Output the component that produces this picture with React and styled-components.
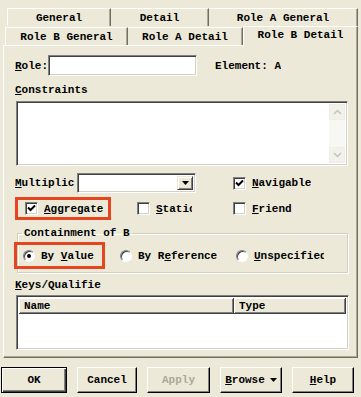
import React from 'react';
import styled, { createGlobalStyle } from 'styled-components';

const GlobalStyle = createGlobalStyle`
  html, body {
    margin: 0;
    padding: 0;
    background: #ece9d8;
  }
  body {
    font-family: "Liberation Mono", "DejaVu Sans Mono", monospace;
    font-size: 11px;
    font-weight: bold;
    color: #000;
  }
`;

const Dialog = styled.div`
  width: 361px;
  height: 397px;
  box-sizing: border-box;
  padding-top: 8px;
  display: flex;
  flex-direction: column;
  overflow: hidden;
`;

const TabRow = styled.div`
  display: flex;
  height: ${(p) => p.$height}px;
  padding-left: ${(p) => p.$left}px;
  position: relative;
  z-index: ${(p) => p.$z || 0};
`;

const Tab = styled.div`
  box-sizing: border-box;
  width: ${(p) => p.$width}px;
  height: ${(p) => (p.$active ? 21 : 18)}px;
  margin-top: ${(p) => (p.$active ? 0 : p.$offset || 0)}px;
  display: flex;
  align-items: center;
  justify-content: center;
  padding-bottom: ${(p) => (p.$active ? 4 : 0)}px;
  background: #ece9d8;
  border-top: 1px solid #fff;
  border-left: ${(p) => (p.$first || p.$active ? '1px solid #fff' : 'none')};
  border-right: 1px solid #716f64;
  box-shadow: inset -1px 0 0 #aca899;
  white-space: nowrap;
`;

const Panel = styled.div`
  margin: 0 3px;
  height: 313px;
  box-sizing: border-box;
  border-top: 1px solid #fff;
  border-left: 1px solid #fff;
  border-right: 1px solid #716f64;
  border-bottom: 1px solid #716f64;
  box-shadow: inset -1px -1px 0 #aca899;
  padding-left: 11px;
  display: flex;
  flex-direction: column;
`;

const Row = styled.div`
  display: flex;
  align-items: center;
  height: ${(p) => p.$height}px;
  margin-top: ${(p) => p.$top}px;
`;

const Label = styled.span`
  display: inline-block;
  width: ${(p) => (p.$width ? `${p.$width}px` : 'auto')};
  margin-left: ${(p) => p.$left || 0}px;
  white-space: nowrap;
  overflow: hidden;
`;

const U = styled.span`
  text-decoration: underline;
`;

const Sunken = styled.div`
  box-sizing: border-box;
  background: #fff;
  border-top: 1px solid #808080;
  border-left: 1px solid #808080;
  border-right: 1px solid #fff;
  border-bottom: 1px solid #fff;
  box-shadow: inset 1px 1px 0 #404040, inset -1px -1px 0 #d4d0c8;
`;

const TextInput = styled(Sunken)`
  width: 149px;
  height: 21px;
`;

const TextArea = styled(Sunken)`
  width: 332px;
  height: 65px;
  margin: 3px 0 0 1px;
  display: flex;
  justify-content: flex-end;
  padding: 2px;
`;

const ScrollBar = styled.div`
  width: 16px;
  display: flex;
  flex-direction: column;
  justify-content: space-between;
  background: #f7f7f4;
`;

const ScrollButton = styled.div`
  height: 16px;
  box-sizing: border-box;
  border: 1px solid #eeede6;
  background: #f2f1ea;
  display: flex;
  align-items: center;
  justify-content: center;
`;

const Combo = styled(Sunken)`
  width: 119px;
  height: 20px;
  display: flex;
  justify-content: flex-end;
  padding: 2px;
`;

const DropButton = styled.div`
  width: 16px;
  box-sizing: border-box;
  background: #ece9d8;
  border-top: 1px solid #ece9d8;
  border-left: 1px solid #ece9d8;
  border-right: 1px solid #404040;
  border-bottom: 1px solid #404040;
  box-shadow: inset 1px 1px 0 #fff, inset -1px -1px 0 #808080;
  display: flex;
  align-items: center;
  justify-content: center;
`;

const CheckBox = styled(Sunken)`
  width: 13px;
  height: 13px;
  flex-shrink: 0;
  margin-right: 6px;
  display: flex;
  align-items: center;
  justify-content: center;
`;

const Radio = styled.div`
  width: 12px;
  height: 12px;
  flex-shrink: 0;
  box-sizing: border-box;
  border-radius: 50%;
  background: #fff;
  border: 1px solid;
  border-color: #808080 #fff #fff #808080;
  box-shadow: inset 1px 1px 0 #404040;
  margin-right: 6px;
  display: flex;
  align-items: center;
  justify-content: center;
`;

const Dot = styled.div`
  width: 4px;
  height: 4px;
  border-radius: 50%;
  background: #000;
`;

const Cell = styled.div`
  display: flex;
  align-items: center;
  width: ${(p) => (p.$width ? `${p.$width}px` : 'auto')};
  flex-shrink: 0;
`;

const Highlight = styled.div`
  display: flex;
  align-items: center;
  box-sizing: border-box;
  width: ${(p) => p.$width}px;
  height: ${(p) => p.$height}px;
  border: 3px solid #e5451f;
  padding-left: ${(p) => p.$pad}px;
  margin-left: ${(p) => p.$shift || 0}px;
`;

const Group = styled.fieldset`
  margin: 7px 0 0 2px;
  padding: 0;
  width: 331px;
  height: 46px;
  box-sizing: border-box;
  border: 1px solid #d0d0bf;
  border-radius: 0;
  box-shadow: 1px 1px 0 #fff, inset 1px 1px 0 #fff;
  display: flex;
  align-items: flex-start;
`;

const Legend = styled.legend`
  padding: 0 2px;
  margin-left: 4px;
  line-height: 12px;
`;

const RadioRow = styled.div`
  display: flex;
  align-items: center;
  margin-top: 3px;
`;

const ListView = styled(Sunken)`
  width: 333px;
  height: 55px;
  margin: 2px 0 0 1px;
  padding: 2px;
`;

const HeaderRow = styled.div`
  display: flex;
  height: 16px;
`;

const HeaderCell = styled.div`
  box-sizing: border-box;
  width: ${(p) => (p.$width ? `${p.$width}px` : 'auto')};
  flex: ${(p) => (p.$width ? 'none' : 1)};
  padding-left: 5px;
  display: flex;
  align-items: center;
  background: #ece9d8;
  border-right: 1px solid #404040;
  border-bottom: 1px solid #404040;
  box-shadow: inset 1px 1px 0 #fff, inset -1px -1px 0 #808080;
`;

const ButtonBar = styled.div`
  display: flex;
  margin-top: 9px;
  padding-left: 1px;
  gap: 10px;
`;

const Button = styled.div`
  box-sizing: border-box;
  width: ${(p) => p.$width}px;
  height: 26px;
  display: flex;
  align-items: center;
  justify-content: center;
  gap: 5px;
  background: #ece9d8;
  color: ${(p) => (p.$disabled ? '#aca899' : '#000')};
  border-top: 1px solid ${(p) => (p.$default ? '#000' : '#fff')};
  border-left: 1px solid ${(p) => (p.$default ? '#000' : '#fff')};
  border-right: 1px solid #000;
  border-bottom: 1px solid #000;
  box-shadow: ${(p) =>
    p.$default
      ? 'inset 1px 1px 0 #fff, inset -1px -1px 0 #404040, inset -2px -2px 0 #808080'
      : 'inset -1px -1px 0 #808080'};
`;

const CheckMark = () => (
  <svg width="9" height="9" viewBox="0 0 9 9">
    <path d="M1 3.5 L3.5 6 L8 1.5" fill="none" stroke="#000" strokeWidth="2" />
  </svg>
);

const Arrow = ({ up, color = '#c3c5bd' }) => (
  <svg width="9" height="6" viewBox="0 0 9 6">
    <path
      d={up ? 'M1 5 L4.5 1.5 L8 5' : 'M1 1 L4.5 4.5 L8 1'}
      fill="none"
      stroke={color}
      strokeWidth="1.5"
    />
  </svg>
);

const Triangle = () => (
  <svg width="7" height="4" viewBox="0 0 7 4">
    <path d="M0 0 H7 L3.5 4 Z" fill="#000" />
  </svg>
);

const Check = ({ checked, children, width }) => (
  <>
    <CheckBox>{checked && <CheckMark />}</CheckBox>
    <Label $width={width}>{children}</Label>
  </>
);

const Option = ({ selected, children, width }) => (
  <>
    <Radio>{selected && <Dot />}</Radio>
    <Label $width={width}>{children}</Label>
  </>
);

export default function App() {
  return (
    <Dialog>
      <GlobalStyle />
      <TabRow $height={18} $left={7}>
        <Tab $width={104} $first>General</Tab>
        <Tab $width={98}>Detail</Tab>
        <Tab $width={149}>Role A General</Tab>
      </TabRow>
      <TabRow $height={19} $left={5} $z={2}>
        <Tab $width={123} $offset={1} $first>Role B General</Tab>
        <Tab $width={115} $offset={1}>Role A Detail</Tab>
        <Tab $width={115} $active>Role B Detail</Tab>
      </TabRow>
      <Panel>
        <Row $height={21} $top={9}>
          <Label $width={33}><U>R</U>ole:</Label>
          <TextInput />
          <Label $left={18}>Element:  A</Label>
        </Row>
        <Row $height={16} $top={6}>
          <Label><U>C</U>onstraints</Label>
        </Row>
        <TextArea>
          <ScrollBar>
            <ScrollButton><Arrow up /></ScrollButton>
            <ScrollButton><Arrow /></ScrollButton>
          </ScrollBar>
        </TextArea>
        <Row $height={20} $top={7}>
          <Cell $width={218}>
            <Label $width={62}><U>M</U>ultiplic</Label>
            <Combo>
              <DropButton><Triangle /></DropButton>
            </Combo>
          </Cell>
          <Cell>
            <Check checked><U>N</U>avigable</Check>
          </Cell>
        </Row>
        <Row $height={23} $top={4}>
          <Cell $width={122}>
            <Highlight $width={96} $height={23} $pad={7}>
              <Check checked><U>A</U>ggregate</Check>
            </Highlight>
          </Cell>
          <Cell $width={96}>
            <Check width={36}><U>S</U>tatic</Check>
          </Cell>
          <Cell>
            <Check><U>F</U>riend</Check>
          </Cell>
        </Row>
        <Group>
          <Legend>Containment of B</Legend>
          <RadioRow>
            <Cell $width={102}>
              <Highlight $width={91} $height={27} $pad={6} $shift={-4}>
                <Option selected>By <U>V</U>alue</Option>
              </Highlight>
            </Cell>
            <Cell $width={116}>
              <Option>By R<U>e</U>ference</Option>
            </Cell>
            <Cell>
              <Option width={70}><U>U</U>nspecified</Option>
            </Cell>
          </RadioRow>
        </Group>
        <Row $height={16} $top={4}>
          <Label><U>K</U>eys/Qualifie</Label>
        </Row>
        <ListView>
          <HeaderRow>
            <HeaderCell $width={215}>Name</HeaderCell>
            <HeaderCell>Type</HeaderCell>
          </HeaderRow>
        </ListView>
      </Panel>
      <ButtonBar>
        <Button $width={66} $default>OK</Button>
        <Button $width={60}>Cancel</Button>
        <Button $width={63} $disabled>Apply</Button>
        <Button $width={62}><span><U>B</U>rowse</span><Triangle /></Button>
        <Button $width={62}><span><U>H</U>elp</span></Button>
      </ButtonBar>
    </Dialog>
  );
}
